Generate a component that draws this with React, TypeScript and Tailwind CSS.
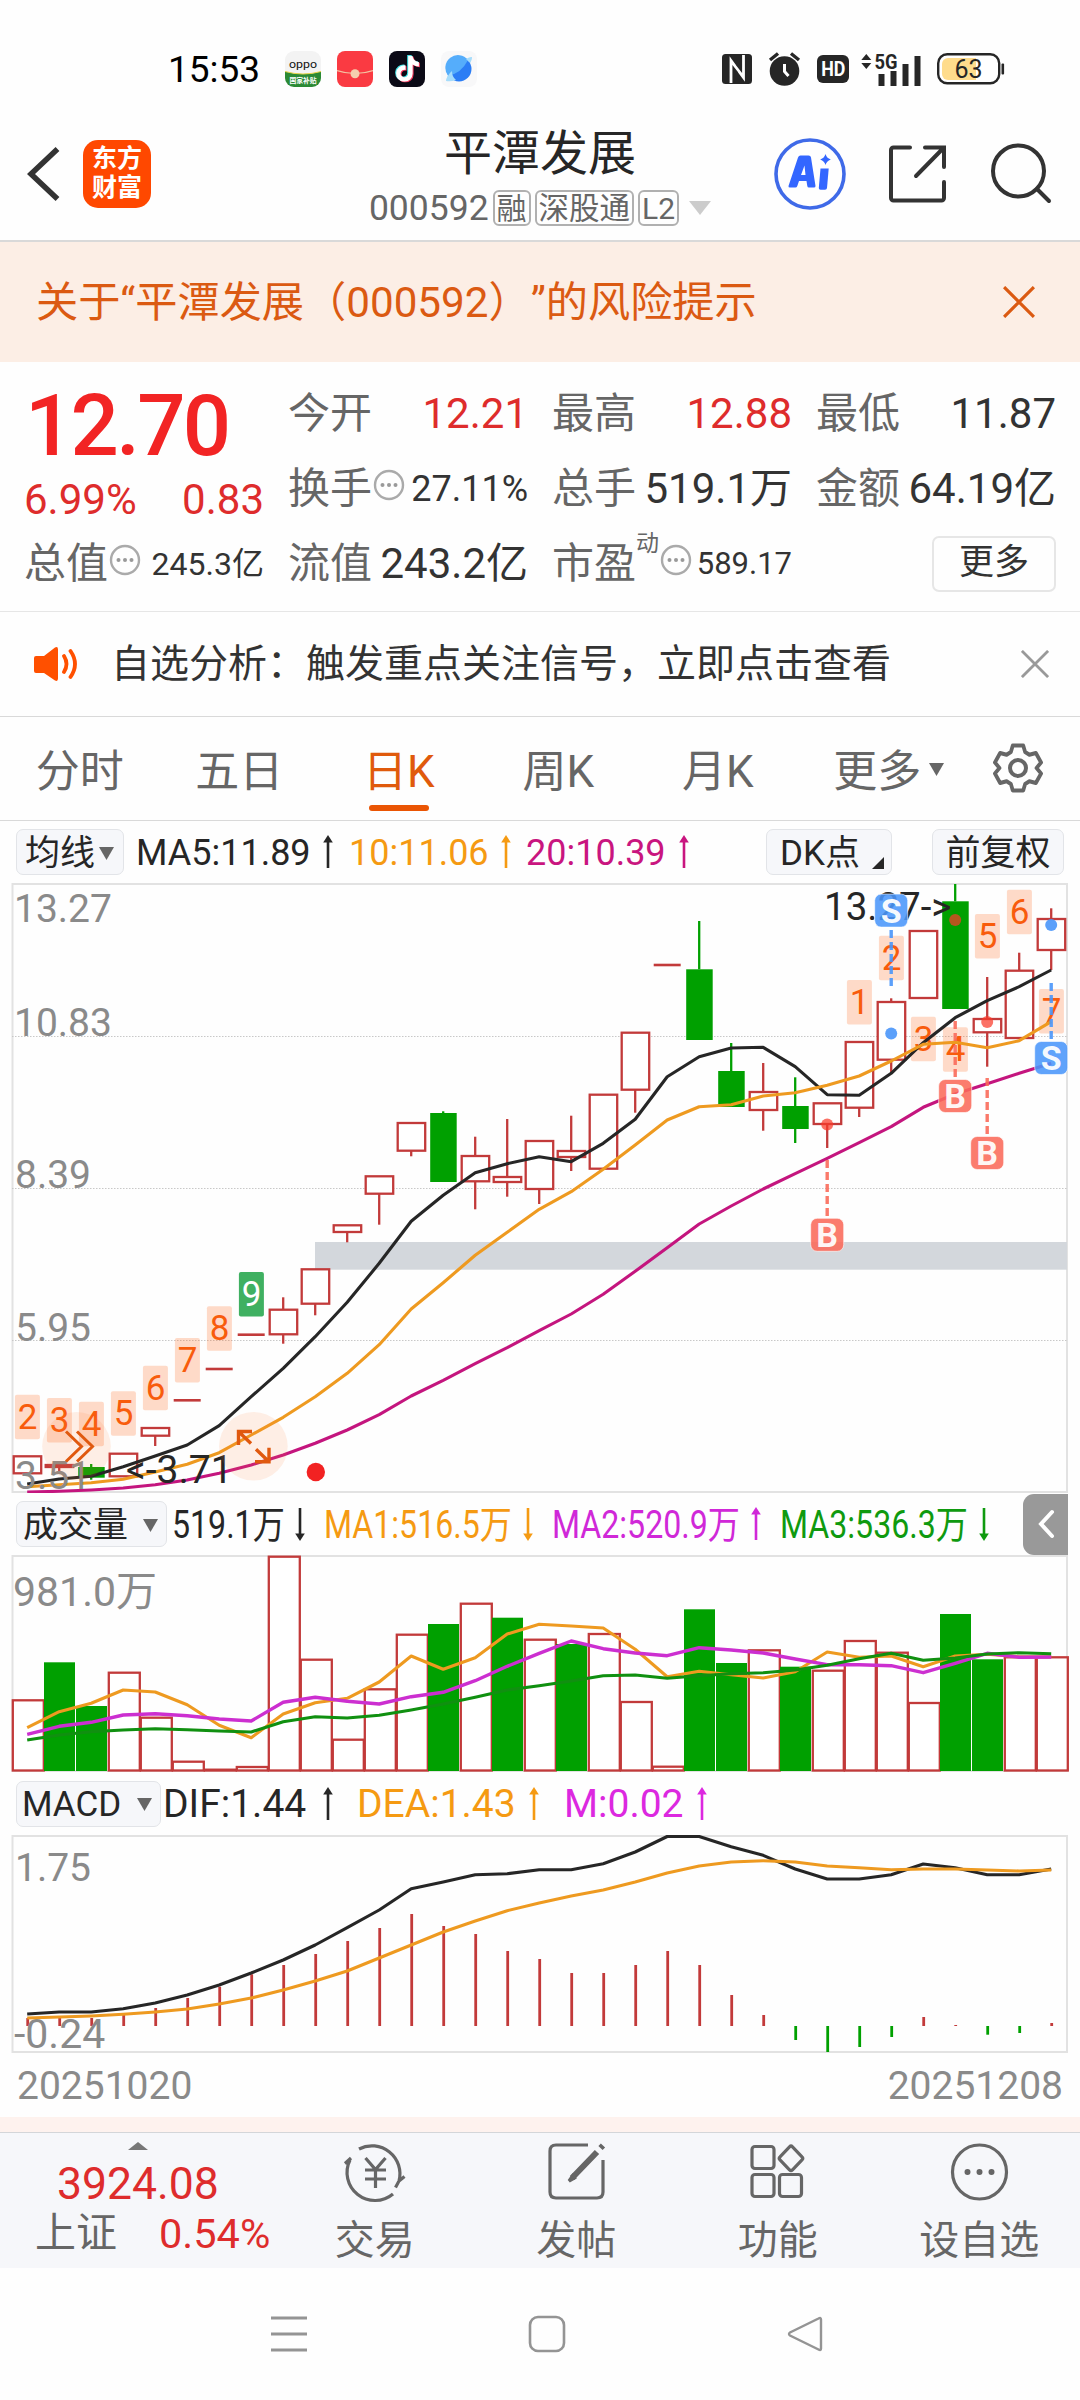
import type { ReactNode } from "react";
import { FaTiktok } from "react-icons/fa";

const RED = "#c23a3a";
const GREEN = "#00a000";
const BLACK = "#262626";
const ORANGE = "#ee9a20";
const MAGENTA = "#c4157e";
const PURPLE = "#cc2fd0";

// every pane shares the same x axis: 33 trading days, 32px apart
const cx = (i: number) => 27.2 + i * 32;

type Candle = { up: boolean; top: number; bottom: number; high?: number; low?: number };

const candles: Candle[] = [
  { up: true, top: 1456.3, bottom: 1473.3 },
  { up: true, top: 1465, bottom: 1467, low: 1472 },
  { up: false, top: 1467, bottom: 1477.7, high: 1464, low: 1479.7 },
  { up: true, top: 1453.7, bottom: 1476.3 },
  { up: true, top: 1428, bottom: 1435.7, low: 1446 },
  { up: true, top: 1400.3, bottom: 1400.3 },
  { up: true, top: 1369, bottom: 1369 },
  { up: true, top: 1334.7, bottom: 1334.7 },
  { up: true, top: 1309.7, bottom: 1334.3, high: 1297.3, low: 1343.7 },
  { up: true, top: 1269.3, bottom: 1303.7, low: 1315.3 },
  { up: true, top: 1225.3, bottom: 1232, low: 1242.3 },
  { up: true, top: 1176.3, bottom: 1193.7, low: 1224.7 },
  { up: true, top: 1123, bottom: 1150.7, low: 1156.3 },
  { up: false, top: 1113, bottom: 1182, high: 1111.3 },
  { up: true, top: 1156, bottom: 1181.3, high: 1136.7, low: 1209.3 },
  { up: true, top: 1177, bottom: 1182, high: 1119, low: 1196.7 },
  { up: true, top: 1141, bottom: 1189, low: 1204 },
  { up: true, top: 1151, bottom: 1157, high: 1115.7, low: 1171 },
  { up: true, top: 1094.7, bottom: 1168.7 },
  { up: true, top: 1032.7, bottom: 1089.7, low: 1112.7 },
  { up: true, top: 965, bottom: 965 },
  { up: false, top: 969.3, bottom: 1040, high: 921 },
  { up: false, top: 1071, bottom: 1107, high: 1043 },
  { up: true, top: 1092, bottom: 1110, high: 1063, low: 1130.7 },
  { up: false, top: 1106, bottom: 1129, high: 1077.3, low: 1143 },
  { up: true, top: 1103.3, bottom: 1124, low: 1148 },
  { up: true, top: 1042, bottom: 1107.7, low: 1117 },
  { up: true, top: 1002, bottom: 1059.7, high: 998.3, low: 1072.7 },
  { up: true, top: 931, bottom: 998 },
  { up: false, top: 901.3, bottom: 1009, high: 884 },
  { up: true, top: 1019, bottom: 1032.3, high: 977, low: 1066.7 },
  { up: true, top: 970.7, bottom: 1038, high: 952.7 },
  { up: true, top: 919, bottom: 950, high: 908.3, low: 970 },
];

const ma5 = [1484, 1479, 1476.3, 1466.7, 1456, 1445, 1425.7, 1396.7, 1368.3, 1336.7, 1302.3, 1263.3, 1221.3, 1195.3, 1172.7, 1163.7, 1156.7, 1161.7, 1143.3, 1119.3, 1076.7, 1056.7, 1048, 1047.3, 1066.7, 1094.7, 1095.3, 1073.3, 1042.7, 1017.7, 1000.7, 986.7, 970];
const ma10 = [1486.7, 1484.7, 1482.7, 1479.3, 1472, 1464.3, 1452.7, 1435, 1417.3, 1396.7, 1373.3, 1344.7, 1309, 1282.7, 1255.3, 1232.3, 1209.3, 1191.7, 1169.3, 1145, 1120, 1106.7, 1104.7, 1096, 1092.7, 1085.3, 1076, 1061, 1044.3, 1042.3, 1047.7, 1040.7, 1021.7];
const ma20 = [1492, 1491.3, 1490, 1488, 1484.7, 1480, 1473.3, 1465, 1455, 1443.3, 1430, 1414.7, 1396, 1380.3, 1363.7, 1347.7, 1330.7, 1314, 1294.3, 1271.3, 1247.7, 1224, 1206, 1189, 1173.7, 1158.3, 1142.7, 1126.7, 1107.3, 1094, 1083.7, 1073.3, 1063.3];

const volTops = [1700.3, 1662.3, 1706, 1672.7, 1717.7, 1761.7, 1769.7, 1767, 1556.7, 1659.7, 1739.7, 1689.3, 1634.7, 1624, 1603.7, 1617.7, 1639.7, 1644, 1634, 1702, 1766.7, 1609.3, 1663, 1650.3, 1666.7, 1670.7, 1641, 1652.7, 1703, 1614, 1659.3, 1657.3, 1657.3];
const volDown = [1, 2, 13, 15, 17, 21, 22, 24, 29, 30];
const vol1 = [1727.7, 1711.7, 1703.3, 1690, 1692, 1704.7, 1725.3, 1737.7, 1714, 1702.7, 1698.3, 1682, 1656, 1669.3, 1657.7, 1634, 1624.3, 1626, 1628, 1649.3, 1676.7, 1671.3, 1674.7, 1678, 1671.7, 1652, 1657.3, 1656, 1666.7, 1656, 1654.3, 1656.7, 1656.7];
const vol2 = [1734.3, 1726.3, 1722.3, 1715, 1713.7, 1715.7, 1719, 1721, 1702.3, 1697.3, 1701.3, 1704, 1696.7, 1692.3, 1680.7, 1666.3, 1653.3, 1641, 1648.7, 1653, 1655.7, 1647.7, 1650, 1653, 1659, 1664.7, 1664.7, 1665.7, 1672.7, 1663.3, 1653.3, 1657.3, 1657];
const vol3 = [1740, 1735, 1731.7, 1730, 1728.7, 1729.7, 1731, 1732, 1721.7, 1716.7, 1718, 1715.3, 1710, 1704, 1697.3, 1690, 1685.7, 1681, 1675.7, 1675, 1678.3, 1675.7, 1673.7, 1672.7, 1670, 1665.3, 1658.7, 1653.3, 1660.3, 1658, 1654, 1652.7, 1653.7];

const macd = [2018, 2016.3, 2018, 2014.7, 2008, 1998, 1986.7, 1974.3, 1965, 1954, 1941, 1928, 1914, 1926, 1934, 1951, 1959, 1973, 1973, 1965, 1951, 1965, 1995, 2015, 2040, 2052, 2047, 2037, 2017, 2025, 2034.7, 2033, 2023];
const dif = [2014, 2012, 2012, 2008.7, 2003, 1995, 1985, 1973, 1960, 1945, 1927.7, 1910, 1888.7, 1882, 1874.7, 1873.7, 1869.7, 1869.7, 1863.7, 1852, 1836.5, 1836.5, 1846.7, 1855.3, 1869, 1879, 1879, 1874.7, 1864, 1867.7, 1874.7, 1874.7, 1869];
const dea = [2018, 2017, 2016, 2014.3, 2012, 2009, 2004, 1998, 1990, 1981, 1971, 1958, 1945, 1932, 1921, 1910.7, 1903, 1896, 1890, 1882, 1873, 1866, 1862, 1860.7, 1862, 1866, 1867.7, 1869.7, 1869, 1869, 1870, 1871, 1870];

const counts = [
  { i: 0, y: 1394.7, n: 2 },
  { i: 1, y: 1398, n: 3 },
  { i: 2, y: 1401.7, n: 4 },
  { i: 3, y: 1391.3, n: 5 },
  { i: 4, y: 1365.7, n: 6 },
  { i: 5, y: 1338, n: 7 },
  { i: 6, y: 1306.3, n: 8 },
  { i: 7, y: 1272, n: 9 },
  { i: 26, y: 980, n: 1 },
  { i: 27, y: 935.7, n: 2 },
  { i: 28, y: 1016.7, n: 3 },
  { i: 29, y: 1027.3, n: 4 },
  { i: 30, y: 914, n: 5 },
  { i: 31, y: 889.7, n: 6 },
  { i: 32, y: 989, n: 7 },
];

const signals = [
  { i: 27, y: 910.6, kind: "S", from: 930, to: 986, dot: 1033.5 },
  { i: 32, y: 1058, kind: "S", from: 983, to: 1040, dot: 925 },
  { i: 29, y: 1096, kind: "B", from: 1021, to: 1077, dot: 920 },
  { i: 30, y: 1153, kind: "B", from: 1078, to: 1135, dot: 1022 },
  { i: 25, y: 1234.8, kind: "B", from: 1160, to: 1216, dot: 1124.5 },
];

function Line({ ys, color, width = 3.1 }: { ys: number[]; color: string; width?: number }) {
  return <polyline points={ys.map((y, i) => `${cx(i)},${y}`).join(" ")} fill="none" stroke={color} strokeWidth={width} strokeLinejoin="round" />;
}

function AxisText({ x, y, children, size = 39 }: { x: number; y: number; children: ReactNode; size?: number }) {
  return <text x={x} y={y} fontSize={size} fill="#8a8a8a">{children}</text>;
}

function PriceChart() {
  return (
    <svg className="block" width="1080" height="610" viewBox="0 883 1080 610">
      <rect x="12.5" y="884" width="1054.5" height="608" fill="none" stroke="#e2e2e2" strokeWidth="2" />
      {[1036.5, 1188.5, 1340.5].map((y) => (
        <line key={y} x1="12" x2="1067" y1={y} y2={y} stroke="#c8c8c8" strokeWidth="1" strokeDasharray="1.5 1.5" />
      ))}
      <rect x="315" y="1242" width="752" height="27.7" fill="#d3d7dc" />

      {candles.map((c, i) => {
        const color = c.up ? RED : GREEN;
        const flat = c.top === c.bottom;
        return (
          <g key={i} stroke={color} strokeWidth="2.3">
            {c.high && <line x1={cx(i)} x2={cx(i)} y1={c.high} y2={c.top} />}
            {c.low && <line x1={cx(i)} x2={cx(i)} y1={c.bottom} y2={c.low} />}
            {flat && <line x1={cx(i) - 13.5} x2={cx(i) + 13.5} y1={c.top} y2={c.top} strokeWidth="2.6" />}
            {!flat && c.up && <rect x={cx(i) - 13.5} y={c.top} width="27.5" height={c.bottom - c.top} fill="#fff" />}
            {!flat && !c.up && <rect x={cx(i) - 13} y={c.top} width="26.5" height={c.bottom - c.top} fill={color} stroke="none" />}
          </g>
        );
      })}

      {counts.map((c) => (
        <g key={c.i}>
          <rect x={cx(c.i) - 12.3} y={c.y} width="25" height="44.5" rx="2" fill={c.n === 9 ? "#3fb061" : "#ff5a0a"} fillOpacity={c.n === 9 ? 1 : 0.22} />
          <text x={cx(c.i) + 0.3} y={c.y + 33.8} fontSize="35" textAnchor="middle" fill={c.n === 9 ? "#fff" : "#f85c0c"}>{c.n}</text>
        </g>
      ))}

      <Line ys={ma5} color={BLACK} />
      <Line ys={ma10} color={ORANGE} />
      <Line ys={ma20} color={MAGENTA} />

      <AxisText x={14} y={922}>13.27</AxisText>
      <AxisText x={14} y={1036}>10.83</AxisText>
      <AxisText x={15} y={1188.3}>8.39</AxisText>
      <AxisText x={15} y={1340.7}>5.95</AxisText>
      <AxisText x={15} y={1489}>3.51</AxisText>
      <text x="824" y="920" fontSize="38.5" fill="#262626">13.27-&gt;</text>
      <text x="126" y="1483.3" fontSize="39" fill="#262626">&lt;-3.71</text>

      {signals.map((s) => {
        const color = s.kind === "S" ? "#4a96fa" : "#fa6a5a";
        return (
          <g key={s.i}>
            <line x1={cx(s.i)} x2={cx(s.i)} y1={s.from} y2={s.to} stroke={color} strokeOpacity="0.9" strokeWidth="3.4" strokeDasharray="8 4" />
            <circle cx={cx(s.i)} cy={s.dot} r="6" fill={s.kind === "S" ? "#4a96fa" : "#fa3a2a"} fillOpacity={s.kind === "S" ? 0.9 : 0.72} />
            <rect x={cx(s.i) - 16.5} y={s.y - 16.5} width="33" height="33" rx="6.5" fill={color} fillOpacity="0.88" stroke="#fff" strokeOpacity="0.6" strokeWidth="1" />
            <text x={cx(s.i)} y={s.y + 12} fontSize="34" fontWeight="700" textAnchor="middle" fill="#fff" fillOpacity="0.94">{s.kind}</text>
          </g>
        );
      })}

      {/* floating pan / expand controls */}
      <circle cx="76.5" cy="1446.3" r="34.3" fill="#ff7a30" fillOpacity="0.12" />
      <path d="M66 1431.5l15.5 15-15.5 15M77 1431.5l15.5 15-15.5 15" fill="none" stroke="#e0590f" strokeWidth="3" />
      <circle cx="253.4" cy="1446.3" r="34.3" fill="#ff7a30" fillOpacity="0.12" />
      <path d="M252 1431.5h-13.5v13.5M238.5 1431.5l12.5 12M255 1461.8h14v-14M269 1461.8l-13-12.5" fill="none" stroke="#e0590f" strokeWidth="3.4" />
      <circle cx="315.8" cy="1472" r="9.2" fill="#f22222" />
    </svg>
  );
}

function VolumeChart() {
  return (
    <svg className="block" width="1080" height="217" viewBox="0 1555 1080 217">
      <rect x="12.5" y="1556" width="1054.5" height="215" fill="none" stroke="#e2e2e2" strokeWidth="2" />
      {volTops.map((y, i) =>
        volDown.includes(i) ? (
          <rect key={i} x={12 + i * 32} y={y} width="31" height={1771 - y} fill={GREEN} />
        ) : (
          <rect key={i} x={12.8 + i * 32} y={y} width="31" height={1770.5 - y} fill="#fff" stroke={RED} strokeWidth="2.3" />
        ),
      )}
      <AxisText x={13} y={1606} size={41}>981.0万</AxisText>
      <Line ys={vol1} color={ORANGE} />
      <Line ys={vol2} color={PURPLE} width={3.4} />
      <Line ys={vol3} color="#109010" />
    </svg>
  );
}

function MacdChart() {
  return (
    <svg className="block" width="1080" height="218" viewBox="0 1835 1080 218">
      <rect x="12.5" y="1836" width="1054.5" height="216" fill="none" stroke="#e2e2e2" strokeWidth="2" />
      {macd.map((y, i) => (
        <line key={i} x1={cx(i) + 0.5} x2={cx(i) + 0.5} y1="2026" y2={y} stroke={y > 2026 ? GREEN : RED} strokeWidth="2.8" />
      ))}
      <AxisText x={15} y={1881}>1.75</AxisText>
      <AxisText x={14} y={2047.5} size={41}>-0.24</AxisText>
      <Line ys={dif} color={BLACK} />
      <Line ys={dea} color={ORANGE} />
    </svg>
  );
}

function Arrow({ down = false }: { down?: boolean }) {
  return (
    <svg className={down ? "shrink-0 rotate-180" : "shrink-0"} width="14" height="34" viewBox="0 0 14 34">
      <path d="M7 5v28" stroke="currentColor" strokeWidth="2.6" />
      <path d="M7 0l4.8 7.5H2.2z" fill="currentColor" />
    </svg>
  );
}

function Legend({ className, down, children }: { className: string; down?: boolean; children: ReactNode }) {
  return (
    <div className={`flex shrink-0 items-center justify-between whitespace-nowrap leading-none ${className}`}>
      <span className="pt-[2px]">{children}</span>
      <Arrow down={down} />
    </div>
  );
}

// volume figures are long, so they are squeezed horizontally
function Narrow({ children }: { children: ReactNode }) {
  return <span className="block w-0 origin-left scale-x-[0.845]">{children}</span>;
}

function Pill({ className, children }: { className: string; children: ReactNode }) {
  return (
    <div className={`flex h-[46px] shrink-0 items-center whitespace-nowrap rounded-[7px] border border-[#e2e4e8] bg-[#f6f7fa] pt-[2px] text-[35px] leading-none text-[#262626] ${className}`}>
      {children}
    </div>
  );
}

function Caret({ className }: { className: string }) {
  return (
    <svg className={className} width="15" height="13" viewBox="0 0 15 13">
      <path d="M0 0h15L7.5 13z" fill="currentColor" />
    </svg>
  );
}

function Dots() {
  return (
    <svg className="mb-2 ml-px shrink-0" width="32" height="32" viewBox="0 0 32 32">
      <circle cx="16" cy="16" r="14" fill="none" stroke="#aaa" strokeWidth="2.4" />
      {[9.5, 16, 22.5].map((x) => <circle key={x} cx={x} cy="16" r="2" fill="#999" />)}
    </svg>
  );
}

function Quote({ label, value, color = "text-[#333]", size = "text-[42px]", dots, sup }: { label: string; value: string; color?: string; size?: string; dots?: boolean; sup?: string }) {
  return (
    <div className="flex h-[75px] items-center whitespace-nowrap leading-none">
      <span className="-ml-px text-[42px] text-[#666]">{label}</span>
      {sup && <span className="-mt-10 text-[23px] text-[#666]">{sup}</span>}
      {dots && <Dots />}
      <span className={`ml-auto ${size} ${color}`}>{value}</span>
    </div>
  );
}

function StatusBar() {
  return (
    <div className="flex h-[100px] items-center pt-[38px]">
      <span className="ml-[168px] w-[117px] text-[37px] leading-none text-black">15:53</span>
      <div className="flex gap-4">
        <svg width="36" height="36" viewBox="0 0 36 36">
          <defs><clipPath id="tile"><rect width="36" height="36" rx="9" /></clipPath></defs>
          <g clipPath="url(#tile)">
            <rect width="36" height="36" fill="#f3f3f3" />
            <path d="M0 20.5q18 5 36 0V36H0z" fill="#2b8a35" />
            <path d="M0 20.5q18 5 36 0" fill="none" stroke="#e8d44a" strokeWidth="1" />
            <text x="18" y="16.5" fontSize="11" textAnchor="middle" textLength="28" lengthAdjust="spacingAndGlyphs" fill="#111">oppo</text>
            <text x="18" y="32" fontSize="6.8" fontWeight="700" textAnchor="middle" fill="#fff">国家补贴</text>
          </g>
        </svg>
        <svg width="36" height="36" viewBox="0 0 36 36">
          <rect width="36" height="36" rx="8" fill="#fa3a42" />
          <path d="M0 19.5q18 6 36 0" fill="none" stroke="#f3c0a0" strokeWidth="1.2" />
          <circle cx="18" cy="22.8" r="4.5" fill="#f5cfae" />
        </svg>
        <svg width="36" height="36" viewBox="0 0 36 36">
          <rect width="36" height="36" rx="8" fill="#0b0a16" />
          <FaTiktok x={4.5} y={4} size={26} color="#3fe0e4" />
          <FaTiktok x={6.5} y={5.6} size={26} color="#f0385c" />
          <FaTiktok x={5.5} y={4.8} size={26} color="#fff" />
        </svg>
        <svg width="36" height="36" viewBox="0 0 36 36">
          <rect width="36" height="36" rx="8" fill="#f8f8f9" />
          <path d="M31 6q-1 8-8 14.5T5 30q1-6 6-12T31 6z" fill="#a6dcfb" />
          <circle cx="18" cy="18" r="12.5" fill="#2b7df5" />
          <path d="M27 9A12.5 12.5 0 0 0 7 24.500Q20 23 27 9z" fill="#55adfb" />
          <path d="M5 30q2-7 6-10 0 6 4 9-5 2-10 1z" fill="#a6dcfb" />
          <path d="M31 6q-3 0-6 2l3.500 3.500Q31 9 31 6z" fill="#a6dcfb" />
        </svg>
      </div>
      <div className="ml-auto mr-[75px] flex items-center">
        <svg width="30" height="30" viewBox="0 0 30 30">
          <rect width="30" height="30" rx="3.5" fill="#262626" />
          <path d="M9 29V6.500l4 5.500M21.500 1v22.500l-4.500-6M9 7l12.500 16" fill="none" stroke="#fff" strokeWidth="2.8" />
        </svg>
        <svg className="ml-4" width="33" height="34" viewBox="0 0 33 34">
          <circle cx="16.5" cy="19" r="14.8" fill="#262626" />
          <path d="M2 8l8-6.500M31 8l-8-6.500" stroke="#262626" strokeWidth="3.4" />
          <path d="M16.500 12v7.500l4 4.500" fill="none" stroke="#fff" strokeWidth="3" />
        </svg>
        <div className="ml-4 flex h-7 w-8 items-center justify-center rounded-[6px] bg-[#262626] text-[21px] font-bold leading-none text-white">
          <span className="scale-x-[0.85]">HD</span>
        </div>
        <svg className="ml-3" width="60" height="34" viewBox="0 -2 60 34">
          <path d="M5.300 0l5 6h-10zM5.300 15l5-6h-10z" fill="#262626" />
          <text x="13.5" y="14.5" fontSize="20.5" fontWeight="700" textLength="23" lengthAdjust="spacingAndGlyphs" fill="#262626">5G</text>
          <path d="M20.500 20v12M32.500 17v15M44.500 10v22M56.500 2v30" stroke="#262626" strokeWidth="6" />
        </svg>
        <svg className="ml-4" width="68" height="32" viewBox="0 0 68 32">
          <rect x="1.2" y="1.2" width="61" height="29" rx="9" fill="#fff" stroke="#262626" strokeWidth="2.4" />
          <path d="M11 5h28v22H11a6 6 0 0 1-6-6V11a6 6 0 0 1 6-6z" fill="#ffdc8c" />
          <rect x="64.5" y="10.5" width="2.6" height="11" rx="1" fill="#262626" />
          <text x="31.5" y="24.5" fontSize="25" textAnchor="middle" fill="#262626">63</text>
        </svg>
      </div>
    </div>
  );
}

function Header() {
  return (
    <header className="flex h-[142px] items-center border-b-2 border-[#d9d9d9] pt-[7px]">
      <div className="flex flex-1 items-center">
        <svg className="ml-[27px]" width="34" height="56" viewBox="0 0 34 56">
          <path d="M30.500 3L4 28l26.500 25" fill="none" stroke="#333" strokeWidth="5.5" />
        </svg>
        <div className="ml-[22px] flex h-[68px] w-[68px] flex-col items-center justify-center gap-[3px] rounded-[15px] bg-[#ff4800] text-[25px] font-bold leading-[26px] text-white">
          <span>东方</span>
          <span>财富</span>
        </div>
      </div>
      <div className="flex flex-col items-center pt-2">
        <h1 className="text-[48px] leading-[48px] text-[#262626]">平潭发展</h1>
        <div className="mt-3 flex h-9 items-center text-[#666]">
          <span className="mr-[4px] pt-[2px] text-[35.5px] leading-none">000592</span>
          <span className="mr-[4px] h-9 rounded-[6px] border-2 border-[#b0b0b0] px-[2px] text-[30px] leading-[33px]">融</span>
          <span className="mr-[4px] h-9 rounded-[6px] border-2 border-[#b0b0b0] px-[2px] text-[30.5px] leading-[33px]">深股通</span>
          <span className="mr-[10px] h-9 rounded-[6px] border-2 border-[#b0b0b0] px-[2px] text-[30px] leading-[33px]">L2</span>
          <svg width="22" height="14" viewBox="0 0 22 14"><path d="M0 0h22L11 14z" fill="#ccc" /></svg>
        </div>
      </div>
      <div className="flex flex-1 items-center justify-end">
        <svg width="72" height="72" viewBox="0 0 72 72">
          <circle cx="36" cy="36" r="34" fill="none" stroke="#3f6ae8" strokeWidth="3.6" />
          <path fillRule="evenodd" d="M14.500 48l9.500-28.500q.7-2 2.500-2h8q2.200 0 2.500 2L41.500 48q0 1.500-1.500 1.500h-5q-1.500 0-1.700-1.500l-.8-5h-7.500l-1.700 5q-.5 1.500-2 1.500H16q-1.800 0-1.500-1.500zM27 37h4.500l-1-9.500z" fill="#3366ff" />
          <path d="M46.500 30.500h8.200L53 50q-.2 1.800-2 1.800h-4.500q-1.800 0-1.700-1.800z" fill="#3366ff" />
          <path d="M51.500 16q1 4 5.300 5.500-4.300 1.500-5.300 5.500-1-4-5.300-5.500 4.300-1.500 5.300-5.500z" fill="#3366ff" />
        </svg>
        <svg className="ml-[42px]" width="60" height="60" viewBox="0 0 60 60" fill="none" stroke="#333" strokeWidth="4" strokeLinecap="round">
          <path d="M22 3.500H5.500a2.500 2.500 0 0 0-2.500 2.500v48a2.500 2.500 0 0 0 2.500 2.500h48a2.500 2.500 0 0 0 2.500-2.500V38M37 3.500h19V23M55 4.500L28 32" />
        </svg>
        <svg className="ml-[42px] mr-[28px]" width="62" height="62" viewBox="0 0 62 62" fill="none" stroke="#333" strokeWidth="4" strokeLinecap="round">
          <circle cx="28.5" cy="28" r="25.5" />
          <path d="M47 46l12 12" />
        </svg>
      </div>
    </header>
  );
}

function Close({ className = "", size }: { className?: string; size: number }) {
  return (
    <svg className={className} width={size} height={size} viewBox="0 0 30 30">
      <path d="M1 1l28 28M29 1L1 29" stroke="currentColor" strokeWidth="3" />
    </svg>
  );
}

const tabs = ["分时", "五日", "日K", "周K", "月K"];

export default function App() {
  return (
    <div className="flex h-[2400px] w-[1080px] flex-col overflow-hidden bg-[#fefefe] font-['Roboto','Noto_Sans_CJK_SC',sans-serif] [text-spacing-trim:space-all]">
      <StatusBar />
      <Header />

      {/* Risk banner */}
      <div className="flex h-[120px] shrink-0 items-center justify-between bg-[#fceee5] pl-9 pr-[45px] text-[#db5a12]">
        <span className="whitespace-nowrap pt-[3px] text-[42.2px] leading-none">关于“平潭发展（000592）”的风险提示</span>
        <Close size={32} />
      </div>

      {/* Quote summary */}
      <section className="grid h-[250px] shrink-0 grid-cols-[239px_239px_239px_239px] grid-rows-[75px_75px_75px] gap-x-[25px] border-b border-[#e6e6e6] pl-[25px] pt-[14px]">
        <div className="row-span-2 flex flex-col">
          <span className="mt-[7px] text-[85px] font-medium leading-[86px] tracking-[-2.7px] text-[#f22424]">12.70</span>
          <div className="-ml-px mt-[10px] flex justify-between text-[42px] leading-none text-[#de2c2c]">
            <span>6.99%</span>
            <span>0.83</span>
          </div>
        </div>
        <Quote label="今开" value="12.21" color="text-[#de2c2c]" />
        <Quote label="最高" value="12.88" color="text-[#de2c2c]" />
        <Quote label="最低" value="11.87" />
        <Quote label="换手" value="27.11%" size="text-[36px]" dots />
        <Quote label="总手" value="519.1万" />
        <Quote label="金额" value="64.19亿" />
        <Quote label="总值" value="245.3亿" size="text-[32px]" dots />
        <Quote label="流值" value="243.2亿" />
        <Quote label="市盈" value="589.17" size="text-[31px]" sup="动" dots />
        <div className="flex items-center justify-end">
          <div className="flex h-14 w-[124px] items-center justify-center rounded-[7px] border-2 border-[#e6e6e6] pb-0.5 text-[35px] leading-none text-[#333]">更多</div>
        </div>
      </section>

      {/* Notice */}
      <div className="flex h-[105px] shrink-0 items-center border-b border-[#d9d9d9]">
        <svg className="ml-[33px]" width="46" height="38" viewBox="0 0 46 38">
          <path d="M3 11h8L22 2.500q3-1.500 3 2v29q0 3.500-3 2L11 28H3q-2 0-2-2V13q0-2 2-2z" fill="#ff5000" />
          <path d="M31 11q5 8 0 16M37.500 6q9 13 0 26" fill="none" stroke="#ff5000" strokeWidth="3.8" strokeLinecap="round" />
        </svg>
        <span className="ml-[32px] whitespace-nowrap pt-px text-[39px] leading-none text-[#333]">自选分析：触发重点关注信号，立即点击查看</span>
        <Close className="ml-auto mr-[31px] text-[#999]" size={28} />
      </div>

      {/* Period tabs */}
      <nav className="flex h-[104px] shrink-0 border-b border-[#d9d9d9] text-[44px] leading-none text-[#666]">
        {tabs.map((tab) => (
          <div key={tab} className={`flex w-[159.5px] flex-col items-center pt-[33px] ${tab === "日K" ? "text-[#e05a0c]" : ""}`}>
            {tab}
            {tab === "日K" && <span className="mt-[11px] h-1.5 w-[60px] rounded-full bg-[#ea5504]" />}
          </div>
        ))}
        <div className="flex w-[159.5px] justify-center pt-[33px]">
          <span className="ml-[23px]">更多</span>
          <Caret className="ml-2 mt-[13px]" />
        </div>
        <svg className="ml-[35px] mt-[25px]" width="52" height="52" viewBox="0 0 52 52" fill="none" stroke="#666" strokeWidth="4" strokeLinejoin="round">
          <path d="M20.500 3.500h11l2 6.500 4.500 2.700 6.800-1.700 5.500 9.500-4.800 5.500 4.800 5.500-5.500 9.500-6.800-1.700-4.500 2.700-2 6.500h-11l-2-6.500-4.500-2.700-6.800 1.700-5.500-9.500L6.500 26l-4.800-5.500 5.500-9.500 6.800 1.700 4.500-2.700z" transform="translate(1.3 0) scale(.95 1)" />
          <circle cx="26" cy="26" r="8" />
        </svg>
      </nav>

      {/* Moving averages */}
      <div className="flex h-[62px] shrink-0 items-center pl-4 text-[36px]">
        <Pill className="w-[108px] pl-[8px]">均线<Caret className="ml-[4px] text-[#666]" /></Pill>
        <Legend className="ml-3 w-[199px] text-[#262626]">MA5:11.89</Legend>
        <Legend className="ml-[14px] w-[164px] text-[#f59a12]">10:11.06</Legend>
        <Legend className="ml-[13px] w-[165px] text-[#c9157f]">20:10.39</Legend>
        <Pill className="ml-[75px] w-[126px] pl-[13px]">
          DK点
          <svg className="ml-3 mt-5" width="12" height="12" viewBox="0 0 12 12"><path d="M12 0v12H0z" fill="#262626" /></svg>
        </Pill>
        <Pill className="ml-10 w-[132px] justify-center">前复权</Pill>
      </div>
      <div className="shrink-0"><PriceChart /></div>

      {/* Volume */}
      <div className="flex h-[62px] shrink-0 items-center pl-4 text-[38px]">
        <Pill className="w-[151px] pl-[6px]">成交量<Caret className="ml-[15px] text-[#666]" /></Pill>
        <Legend className="ml-[5px] w-[135px] text-[#262626]" down><Narrow>519.1万</Narrow></Legend>
        <Legend className="ml-[17px] w-[211px] text-[#f59a12]" down><Narrow>MA1:516.5万</Narrow></Legend>
        <Legend className="ml-[17px] w-[211px] text-[#d028d8]"><Narrow>MA2:520.9万</Narrow></Legend>
        <Legend className="ml-[17px] w-[211px] text-[#0f9a0f]" down><Narrow>MA3:536.3万</Narrow></Legend>
        <div className="ml-auto mr-3 flex h-[61px] w-[45px] items-center justify-center rounded-l-[11px] bg-[#999]">
          <svg width="18" height="30" viewBox="0 0 18 30"><path d="M15 3L4 15l11 12" fill="none" stroke="#fff" strokeWidth="4" strokeLinecap="round" /></svg>
        </div>
      </div>
      <div className="shrink-0"><VolumeChart /></div>

      {/* MACD */}
      <div className="flex h-[63px] shrink-0 items-center pl-4 text-[39px]">
        <Pill className="w-[145px] pl-[5px]">MACD<Caret className="ml-[16px] text-[#666]" /></Pill>
        <Legend className="ml-[2px] w-[172px] text-[#262626]">DIF:1.44</Legend>
        <Legend className="ml-[22px] w-[184px] text-[#f59a12]">DEA:1.43</Legend>
        <Legend className="ml-[23px] w-[145px] text-[#dc28e0]">M:0.02</Legend>
      </div>
      <div className="shrink-0"><MacdChart /></div>
      <div className="flex h-16 shrink-0 items-center justify-between px-[17px] pt-[2px] text-[39px] leading-none text-[#8a8a8a]">
        <span>20251020</span>
        <span>20251208</span>
      </div>
      <div className="h-[15px] shrink-0 bg-[#fef2ee]" />

      {/* Bottom bar */}
      <div className="flex h-[136px] shrink-0 border-t border-[#d4d6d9] bg-[#f6f7fa] leading-none text-[#666]">
        <div className="flex w-[274px] flex-col">
          <svg className="ml-[128px] mt-[9px]" width="20" height="8" viewBox="0 0 20 8"><path d="M10 0l10 8H0z" fill="#777" /></svg>
          <span className="ml-[57px] mt-[12px] text-[44.5px] text-[#de2c2c]">3924.08</span>
          <div className="mt-[6px] flex items-center text-[41px]">
            <span className="ml-[35px]">上证</span>
            <span className="ml-[42px] text-[41.5px] text-[#de2c2c]">0.54%</span>
          </div>
        </div>
        <Action label="交易">
          <path d="M17 8a28 28 0 0 1 40 32l-3.500 6.500M57 40l5.500-4.500M51 53a28 28 0 0 1-43-34l-5 3.500 6-5.500" />
          <path d="M23.500 17l10 11.500 10-11.500M23 29h21M23 38h21M33.500 28.500V47" />
        </Action>
        <Action label="发帖">
          <path d="M44 4H12q-6 0-6 6v41q0 6 6 6h41q6 0 6-6V19" />
          <path d="M59 4.500l-2.500 2.500M53 11L28 37" strokeWidth="6" />
          <path d="M30 33l-5 7 7-4" />
        </Action>
        <Action label="功能">
          <rect x="7" y="5.5" width="22" height="22" rx="3" />
          <rect x="7" y="33.5" width="22" height="22" rx="3" />
          <rect x="34.5" y="33.5" width="22" height="22" rx="3" />
          <path d="M44.500 5.800q1.500-1.500 3 0l9.500 10q1.500 1.500 0 3l-9.500 10q-1.500 1.500-3 0l-9.500-10q-1.500-1.500 0-3z" />
        </Action>
        <Action label="设自选">
          <circle cx="32.5" cy="31" r="27" />
          <path d="M20.500 31h.01M32.500 31h.01M44.500 31h.01" strokeWidth="6" strokeLinecap="round" />
        </Action>
      </div>

      {/* System navigation */}
      <div className="flex h-[132px] shrink-0 items-center">
        <svg className="ml-[271px]" width="36" height="36" viewBox="0 0 36 36"><path d="M0 2h36M0 18h36M0 34h36" stroke="#949494" strokeWidth="3" /></svg>
        <svg className="ml-[221px]" width="38" height="38" viewBox="0 0 38 38"><rect x="2" y="2" width="34" height="34" rx="8" fill="none" stroke="#949494" strokeWidth="2.6" /></svg>
        <svg className="ml-[221px]" width="36" height="38" viewBox="0 0 36 38"><path d="M31.500 3.500Q34 2 34 4.500v29q0 2.500-2.500 1L3 20.500q-2-1.500 0-3z" fill="none" stroke="#949494" strokeWidth="2.4" /></svg>
      </div>
    </div>
  );
}

function Action({ label, children }: { label: string; children: ReactNode }) {
  return (
    <div className="flex w-[201.5px] flex-col items-center pt-2">
      <svg width="65" height="62" viewBox="0 0 65 62" fill="none" stroke="#666" strokeWidth="3.2">{children}</svg>
      <span className="mt-[18px] text-[40px]">{label}</span>
    </div>
  );
}
